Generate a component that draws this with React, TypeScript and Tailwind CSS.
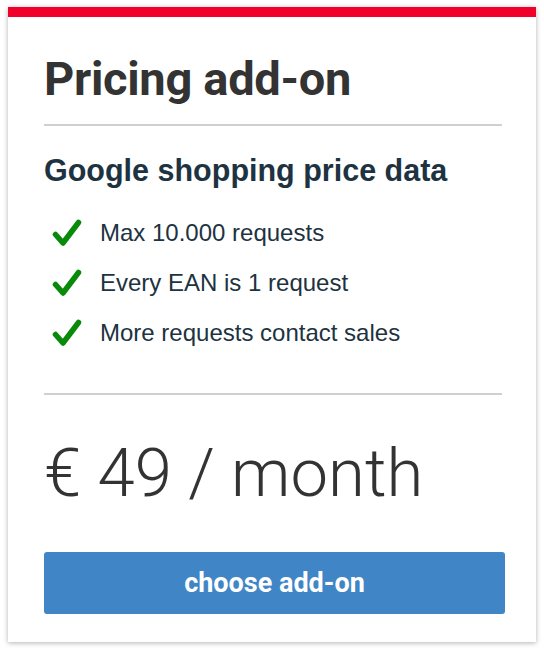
import React from 'react';

const Check = () => (
  <svg viewBox="0 0 30 28" className="w-[30px] h-[28px] shrink-0" aria-hidden>
    <path d="M3.5 15.5 L11 24 L26.5 3.5" fill="none" stroke="#0a8a0a" strokeWidth="5.5" strokeLinecap="round" strokeLinejoin="round" />
  </svg>
);

const features = ['Max 10.000 requests', 'Every EAN is 1 request', 'More requests contact sales'];

export default function App() {
  return (
    <div className="w-[544px] h-[654px] bg-white pt-[7px] px-[8px]">
      <div className="bg-white shadow-[0_1px_5px_rgba(0,0,0,0.3)] h-[635px] flex flex-col">
        <div className="h-[10px] bg-[#f0002b]" />
        <div className="pl-[36px] pr-[34px] flex flex-col">
          <h1 className="mt-[34px] text-[47px] leading-[56px] font-bold text-[#333] font-['Roboto',sans-serif] tracking-[-0.3px]">
            Pricing add-on
          </h1>
          <div className="mt-[17px] h-[2px] bg-[#d0d0d0]" />
          <h2 className="mt-[26px] text-[30.5px] leading-[36px] font-bold text-[#1d3341] font-['Liberation_Sans',Arial,sans-serif]">
            Google shopping price data
          </h2>
          <ul className="mt-[30px] flex flex-col gap-[20px]">
            {features.map((f) => (
              <li key={f} className="flex items-center h-[30px] pl-[8px]">
                <Check />
                <span className="ml-[18px] text-[24px] text-[#1d3341] font-['Liberation_Sans',Arial,sans-serif]">{f}</span>
              </li>
            ))}
          </ul>
          <div className="mt-[45px] h-[2px] bg-[#d0d0d0]" />
          <div className="mt-[38px] text-[67px] leading-[80px] font-light text-[#333] font-['Roboto',sans-serif]">
            € 49 / month
          </div>
          <button className="mt-[39px] -mr-[3px] h-[62px] rounded-[3px] bg-[#4085c6] text-white text-[27px] font-bold font-['Roboto',sans-serif]">
            choose add-on
          </button>
        </div>
      </div>
    </div>
  );
}
